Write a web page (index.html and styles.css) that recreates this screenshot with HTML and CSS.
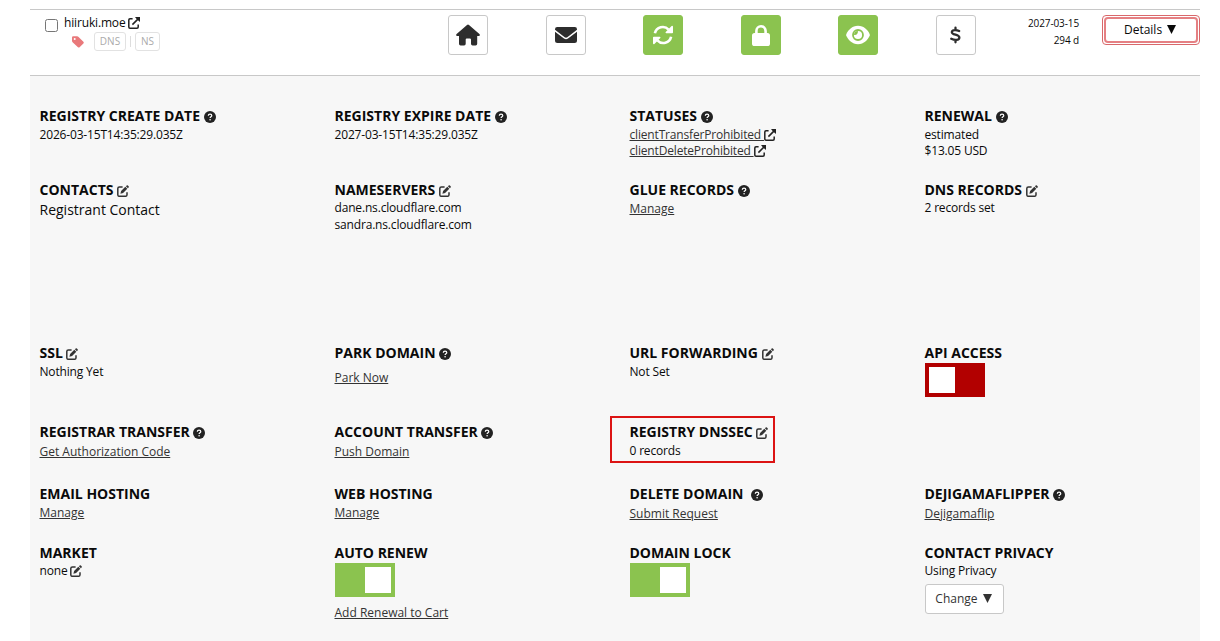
FILE: index.html
```html
<!DOCTYPE html>
<html lang="en">

<head>
    <meta charset="utf-8">
    <title>Domain Management</title>
    <meta name="viewport" content="width=device-width, initial-scale=1">
    <link rel="stylesheet" href="styles.css">
</head>

<body>
    <!-- icons -->
    <svg class="sprite">
        <symbol id="help" viewBox="0 0 12 12">
            <circle cx="6" cy="6" r="6" fill="#222" />
            <path d="M4.3 4.7C4.3 2.7 7.8 2.7 7.8 4.7C7.8 5.8 6.1 5.9 6.1 7.1" fill="none" stroke="#fff" stroke-width="1.2" />
            <circle cx="6.1" cy="8.8" r=".8" fill="#fff" />
        </symbol>
        <symbol id="edit" viewBox="0 0 12 12">
            <path d="M5.6 1.9H2.4Q.8 1.9.8 3.5V9.7Q.8 11.3 2.4 11.3H8.4Q10 11.3 10 9.7V7.3" fill="none" stroke="#333" stroke-width="1.5" />
            <path d="M3.4 8.8L4.1 6L8.3 1.8L10.3 3.8L6.1 8Z M8.9 1.2L9.7.4Q10.3-.1 10.9.5L11.6 1.2Q12.1 1.8 11.6 2.4L10.9 3.2Z" fill="#333" />
        </symbol>
        <symbol id="ext" viewBox="0 0 12 12">
            <path d="M4.6 1.8H2Q.8 1.8.8 3V10Q.8 11.2 2 11.2H9Q10.2 11.2 10.2 10V7.6M4.4 7.6L10.4 1.6" fill="none" stroke="#222" stroke-width="1.5" />
            <path d="M7 0H12V5L10.3 3.6L8.4 1.7Z" fill="#222" />
        </symbol>
        <symbol id="tag" viewBox="0 0 12 12">
            <path fill-rule="evenodd" d="M0 1.5Q0 .3 1.2.3H5.2Q5.8.3 6.3.8L11.4 5.8Q12.2 6.6 11.4 7.4L7.6 11.2Q6.8 12 6 11.2L.6 6.2Q0 5.6 0 5ZM2.7 2A1 1 0 1 0 2.7 4A1 1 0 1 0 2.7 2Z" fill="#e9797b" />
        </symbol>
        <symbol id="home" viewBox="0 0 24 22">
            <path d="M11 .9Q12 .1 13 .9L23.4 10Q24.4 11.2 23.2 12H21.2V19.8Q21.2 21.4 19.6 21.4H16.6Q15 21.4 15 19.8V15.5Q15 14.4 13.9 14.4H10.8Q9.7 14.4 9.7 15.5V19.8Q9.7 21.4 8.1 21.4H4.6Q3 21.4 3 19.8V12H.8Q-.4 11.2.6 10Z" fill="#2d2d2d" />
        </symbol>
        <symbol id="mail" viewBox="0 0 22 16">
            <path d="M0 2.2Q0 0 2.2 0H19.8Q22 0 22 2.2V2.8L12.3 10.2Q11 11.1 9.7 10.2L0 2.8ZM0 4.8L9 11.5Q11 12.9 13 11.5L22 4.8V13.5Q22 16 19.5 16H2.5Q0 16 0 13.5Z" fill="#2d2d2d" />
        </symbol>
        <symbol id="sync" viewBox="0 0 20 20">
            <path d="M1.9 8.3A8 8 0 0 1 15.6 4.6M18.1 11.7A8 8 0 0 1 4.4 15.4" fill="none" stroke="#fff" stroke-width="2.6" />
            <path d="M20 1.4V7.4Q20 8.2 19.2 8.2H13.2Q12 7.8 12.7 6.9L18.6.9Q19.6.3 20 1.4ZM0 18.6V12.6Q0 11.8.8 11.8H6.8Q8 12.2 7.3 13.1L1.4 19.1Q.4 19.7 0 18.6Z" fill="#fff" />
        </symbol>
        <symbol id="lock" viewBox="0 0 18 21">
            <path d="M4.4 9V5.9A4.6 4.6 0 0 1 13.6 5.9V9" fill="none" stroke="#fff" stroke-width="2.6" />
            <rect y="8" width="18" height="13" rx="2.6" fill="#fff" />
        </symbol>
        <symbol id="eye" viewBox="0 0 24 20">
            <path d="M12 .8C6 .8 2.2 5 .3 9.2Q0 10 .3 10.8C2.2 15 6 19.2 12 19.2S21.8 15 23.7 10.8Q24 10 23.7 9.2C21.8 5 18 .8 12 .8Z" fill="#fff" />
            <circle cx="12" cy="10" r="5" fill="none" stroke="#8bc34f" stroke-width="1.8" />
            <path d="M8 10Q11.8 10.6 12 6A4 4 0 0 0 8 10Z" fill="#8bc34f" />
        </symbol>
        <symbol id="dollar" viewBox="0 0 12 18">
            <path d="M6 1V3.4M6 14.4V17M10 4.6C7.6 3.4 2 2.7 2 5.9C2 9.2 10.2 8.2 10.2 11.7C10.2 15.2 4.7 14.7 1.4 13.1" fill="none" stroke="#2d2d2d" stroke-width="2.5" stroke-linecap="round" />
        </symbol>
    </svg>

    <div class="domain">
        <div class="name">
            <input type="checkbox" class="check">
            <div>
                <div class="host">hiiruki.moe <svg class="ico"><use href="#ext" /></svg></div>
                <div class="tags">
                    <svg class="ico tag"><use href="#tag" /></svg>
                    <span class="label dns">DNS</span><i class="sep"></i><span class="label ns">NS</span>
                </div>
            </div>
        </div>
        <div class="tool"><a class="btn"><svg width="24" height="22"><use href="#home" /></svg></a></div>
        <div class="tool"><a class="btn"><svg width="22" height="16"><use href="#mail" /></svg></a></div>
        <div class="tool"><a class="btn on"><svg width="20" height="20"><use href="#sync" /></svg></a></div>
        <div class="tool"><a class="btn on"><svg width="18" height="21"><use href="#lock" /></svg></a></div>
        <div class="tool"><a class="btn on"><svg width="24" height="20"><use href="#eye" /></svg></a></div>
        <div class="tool"><a class="btn"><svg width="11" height="18"><use href="#dollar" /></svg></a></div>
        <div class="date">2027-03-15<br>294 d</div>
        <div><button class="details"><span>Details <svg class="arrow" viewBox="0 0 9 9"><path d="M0 0H9L4.5 9Z" /></svg></span></button></div>
    </div>

    <div class="panel">
        <div class="cell low">
            <h4>Registry Create Date <svg class="ico"><use href="#help" /></svg></h4>
            <p>2026-03-15T14:35:29.035Z</p>
        </div>
        <div class="cell low">
            <h4>Registry Expire Date <svg class="ico"><use href="#help" /></svg></h4>
            <p>2027-03-15T14:35:29.035Z</p>
        </div>
        <div class="cell low">
            <h4>Statuses <svg class="ico"><use href="#help" /></svg></h4>
            <p><a>clientTransferProhibited </a><svg class="ico"><use href="#ext" /></svg></p>
            <p><a>clientDeleteProhibited </a><svg class="ico"><use href="#ext" /></svg></p>
        </div>
        <div class="cell low">
            <h4>Renewal <svg class="ico"><use href="#help" /></svg></h4>
            <p>estimated</p>
            <p>$13.05 USD</p>
        </div>

        <div class="cell">
            <h4>Contacts <svg class="ico"><use href="#edit" /></svg></h4>
            <p class="contact">Registrant Contact</p>
        </div>
        <div class="cell">
            <h4>Nameservers <svg class="ico"><use href="#edit" /></svg></h4>
            <p>dane.ns.cloudflare.com</p>
            <p class="second">sandra.ns.cloudflare.com</p>
        </div>
        <div class="cell">
            <h4>Glue Records <svg class="ico"><use href="#help" /></svg></h4>
            <p class="link down"><a>Manage</a></p>
        </div>
        <div class="cell">
            <h4>DNS Records <svg class="ico"><use href="#edit" /></svg></h4>
            <p>2 records set</p>
        </div>

        <div class="cell low">
            <h4>SSL <svg class="ico"><use href="#edit" /></svg></h4>
            <p>Nothing Yet</p>
        </div>
        <div class="cell">
            <h4>Park Domain <svg class="ico"><use href="#help" /></svg></h4>
            <p class="link park"><a>Park Now</a></p>
        </div>
        <div class="cell low">
            <h4>URL Forwarding <svg class="ico"><use href="#edit" /></svg></h4>
            <p>Not Set</p>
        </div>
        <div class="cell">
            <h4>API Access</h4>
            <div class="switch off"><i></i></div>
        </div>

        <div class="cell low">
            <h4>Registrar Transfer <svg class="ico"><use href="#help" /></svg></h4>
            <p class="link down"><a>Get Authorization Code</a></p>
        </div>
        <div class="cell low">
            <h4>Account Transfer <svg class="ico"><use href="#help" /></svg></h4>
            <p class="link down"><a>Push Domain</a></p>
        </div>
        <div class="cell low marked">
            <h4>Registry DNSSEC <svg class="ico"><use href="#edit" /></svg></h4>
            <p>0 records</p>
        </div>
        <div class="cell"></div>

        <div class="cell low">
            <h4>Email Hosting</h4>
            <p class="link"><a>Manage</a></p>
        </div>
        <div class="cell low">
            <h4>Web Hosting</h4>
            <p class="link"><a>Manage</a></p>
        </div>
        <div class="cell low">
            <h4>Delete Domain &nbsp;<svg class="ico"><use href="#help" /></svg></h4>
            <p class="link down"><a>Submit Request</a></p>
        </div>
        <div class="cell low">
            <h4>Dejigamaflipper <svg class="ico"><use href="#help" /></svg></h4>
            <p class="link down"><a>Dejigamaflip</a></p>
        </div>

        <div class="cell">
            <h4>Market</h4>
            <p>none <svg class="ico"><use href="#edit" /></svg></p>
        </div>
        <div class="cell">
            <h4>Auto Renew</h4>
            <div class="switch"><i></i></div>
            <p class="link cart"><a>Add Renewal to Cart</a></p>
        </div>
        <div class="cell">
            <h4>Domain Lock</h4>
            <div class="switch"><i></i></div>
        </div>
        <div class="cell">
            <h4>Contact Privacy</h4>
            <p>Using Privacy</p>
            <button class="change">Change <svg class="arrow" viewBox="0 0 9 9"><path d="M0 0H9L4.5 9Z" /></svg></button>
        </div>
    </div>
</body>

</html>
```
FILE: styles.css
```css
* {
    box-sizing: border-box;
}

body {
    margin: 0;
    height: 641px;
    padding: 9px 20px 0 30px;
    overflow: hidden;
    background: #fff;
    color: #0a0a0a;
    font-family: "Open Sans", sans-serif;
    font-size: 12px;
    line-height: 16px;
}

h4, p {
    margin: 0;
}

.sprite {
    display: none;
}

.ico {
    width: 12px;
    height: 12px;
    vertical-align: -2px;
}

/* domain row */
.domain {
    display: grid;
    grid-template-columns: 389.6px repeat(8, 97.5px);
    height: 67px;
    padding-top: 5px;
    border-top: 1px solid #c8c8c8;
    border-bottom: 1px solid #c8c8c8;
}

.name {
    display: flex;
}

.check {
    width: 13px;
    height: 13px;
    margin: 4px 6px 0 15px;
}

.host {
    height: 17px;
    letter-spacing: -.16px;
}

.tags {
    display: flex;
    align-items: center;
    padding-left: 8px;
}

.tag {
    margin-right: 10px;
}

.label {
    height: 19px;
    border: 1px solid #e2e2e2;
    border-radius: 3px;
    color: #aaa;
    font-size: 10px;
    line-height: 17px;
    text-align: center;
}

.dns {
    width: 32px;
}

.ns {
    width: 25px;
}

.sep {
    width: 1px;
    height: 11px;
    margin: 0 4px;
    background: #ddd;
}

.tool {
    display: flex;
    justify-content: center;
}

.btn {
    display: flex;
    align-items: center;
    justify-content: center;
    width: 40px;
    height: 40px;
    border: 1px solid #c8c8c8;
    border-radius: 3px;
    background: #fff;
}

.btn.on {
    border-color: #8bc34f;
    background: #8bc34f;
}

.date {
    padding-right: 23px;
    font-size: 10px;
    line-height: 17px;
    letter-spacing: -.1px;
    text-align: right;
}

button {
    font: inherit;
    color: #0a0a0a;
    background: #fff;
}

.details {
    display: block;
    width: 98px;
    height: 30px;
    padding: 1px;
    border: 1px solid #d9686b;
    border-radius: 4px;
}

.details span {
    display: block;
    height: 26px;
    padding-right: 2px;
    border: 2px solid #e58083;
    border-radius: 4px;
    line-height: 22px;
}

.arrow {
    width: 9px;
    height: 9px;
    margin-left: 2px;
    fill: currentColor;
}

/* settings */
.panel {
    display: grid;
    grid-template-columns: repeat(4, 295px);
    grid-template-rows: 74px 163px 79px 62px 59px 1fr;
    height: 565px;
    padding: 31px 0 0 9.5px;
    overflow: hidden;
    background: #f7f7f7;
}

.cell h4 {
    height: 19px;
    font-size: 14px;
    line-height: 18px;
    text-transform: uppercase;
}

.cell.low h4 {
    height: 20px;
}

.cell p {
    letter-spacing: -.17px;
}

.cell a {
    color: #333;
    text-decoration: underline;
}

.cell .contact {
    padding-top: 2px;
    font-size: 14px;
    letter-spacing: 0;
}

.cell .second {
    padding-top: 1px;
}

.cell .link {
    letter-spacing: 0;
}

.down {
    padding-top: 1px;
}

.park {
    padding-top: 7px;
}

.cart {
    padding-top: 8px;
}

.marked {
    width: 165px;
    height: 47px;
    margin: -7px 0 0 -19.5px;
    padding: 5px 0 0 17.5px;
    border: 2px solid #dc1414;
}

.switch {
    display: flex;
    justify-content: flex-end;
    width: 60px;
    height: 34px;
    margin-left: .5px;
    padding: 4px;
    background: #8bc34f;
}

.switch i {
    width: 26px;
    height: 26px;
    background: #fff;
}

.switch.off {
    justify-content: flex-start;
    background: #b20000;
}

.change {
    width: 79px;
    height: 30px;
    margin: 5px 0 0 .5px;
    padding: 0 2px 0 0;
    border: 1px solid #c8c8c8;
    border-radius: 3px;
    color: #333;
}
```
